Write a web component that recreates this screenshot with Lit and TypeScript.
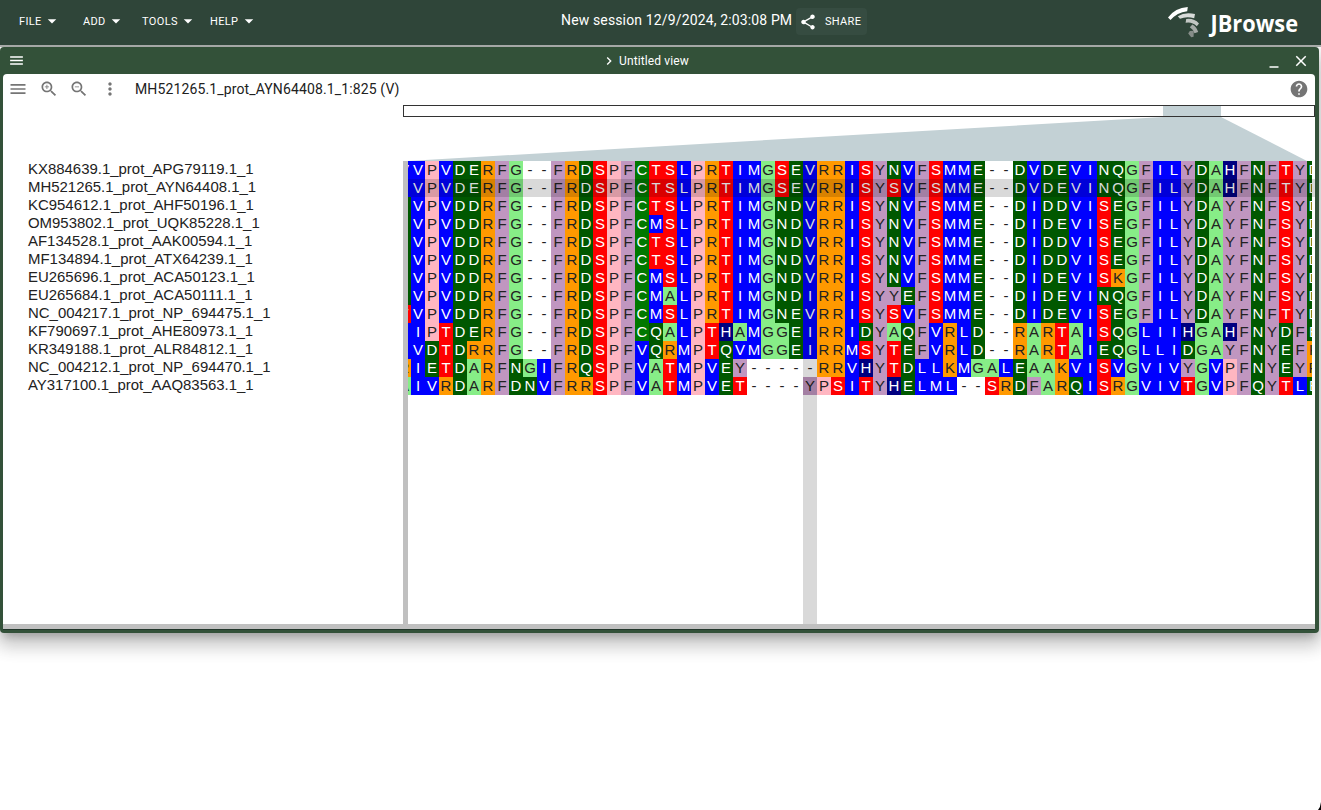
import { LitElement, html, css } from "lit";
import { customElement } from "lit/decorators.js";
import { classMap } from "lit/directives/class-map.js";

const rows: { name: string; seq: string }[] = [
  { name: "KX884639.1_prot_APG79119.1_1", seq: "VVPVDERFG--FRDSPFCTSLPRTIMGSEVRRISYNVFSMME--DVDEVINQGFILYDAHFNFTYD" },
  { name: "MH521265.1_prot_AYN64408.1_1", seq: "IVPVDERFG--FRDSPFCTSLPRTIMGSEVRRISYSVFSMME--DVDEVINQGFILYDAHFNFTYD" },
  { name: "KC954612.1_prot_AHF50196.1_1", seq: "EVPVDDRFG--FRDSPFCTSLPRTIMGNDVRRISYNVFSMME--DIDDVISEGFILYDAYFNFSYD" },
  { name: "OM953802.1_prot_UQK85228.1_1", seq: "EVPVDDRFG--FRDSPFCMSLPRTIMGNDVRRISYNVFSMME--DIDEVISEGFILYDAYFNFSYD" },
  { name: "AF134528.1_prot_AAK00594.1_1", seq: "EVPVDDRFG--FRDSPFCTSLPRTIMGNDVRRISYNVFSMME--DIDDVISEGFILYDAYFNFSYD" },
  { name: "MF134894.1_prot_ATX64239.1_1", seq: "EVPVDDRFG--FRDSPFCTSLPRTIMGNDVRRISYNVFSMME--DIDDVISEGFILYDAYFNFSYD" },
  { name: "EU265696.1_prot_ACA50123.1_1", seq: "EVPVDDRFG--FRDSPFCMSLPRTIMGNDVRRISYNVFSMME--DIDEVISKGFILYDAYFNFSYD" },
  { name: "EU265684.1_prot_ACA50111.1_1", seq: "EVPVDDRFG--FRDSPFCMALPRTIMGNDIRRISYYEFSMME--DIDEVINQGFILYDAYFNFSYD" },
  { name: "NC_004217.1_prot_NP_694475.1_1", seq: "TVPVDDRFG--FRDSPFCMSLPRTIMGNEVRRISYSVFSMME--DIDEVISEGFILYDAYFNFTYD" },
  { name: "KF790697.1_prot_AHE80973.1_1", seq: "IIPTDERFG--FRDSPFCQALPTHAMGGEIRRIDYAQFVRLD--RARTAISQGLIIHGAHFNYDFE" },
  { name: "KR349188.1_prot_ALR84812.1_1", seq: "IVDTDRRFG--FRDSPFVQRMPTQVMGGEIRRMSYTEFVRLD--RARTAIEQGLLIDGAYFNYEFK" },
  { name: "NC_004212.1_prot_NP_694470.1_1", seq: "RIETDARFNGIFRQSPFVATMPVEY-----RRVHYTDLLKMGALEAAKVISVGVIVYGVPFNYEYR" },
  { name: "AY317100.1_prot_AAQ83563.1_1", seq: "AIVRDARFDNVFRRSPFVATMPVET----YPSITYHELML--SRDFARQISRGVIVTGVPFQYTLE" },
];

const groups: [string, string][] = [
  ["VILM", "blue"],
  ["DENQ", "dark"],
  ["ST", "red"],
  ["RK", "orange"],
  ["FY", "mauve"],
  ["GA", "light"],
  ["P", "pink"],
  ["C", "green"],
  ["H", "navy"],
];
const tint = (c: string) => groups.find(([letters]) => letters.includes(c))?.[1] ?? "gap";

const label = (c: string, i: number) => (i === 0 && "EI".includes(c) ? "" : c);

const icon = (size: number, d: string) =>
  html`<svg width=${size} height=${size} viewBox="0 0 24 24" fill="currentColor"><path d=${d}></path></svg>`;
const MENU = "M3 18h18v-2H3v2zm0-5h18v-2H3v2zm0-7v2h18V6H3z";
const GLASS =
  "M15.5 14h-.79l-.28-.27C15.41 12.59 16 11.11 16 9.5 16 5.91 13.09 3 9.5 3S3 5.91 3 9.5 5.91 16 9.5 16c1.61 0 3.09-.59 4.23-1.57l.27.28v.79l5 4.99L20.49 19l-4.99-5zm-6 0C7.01 14 5 11.99 5 9.5S7.01 5 9.5 5 14 7.01 14 9.5 11.99 14 9.5 14z";

@customElement("session-header")
class SessionHeader extends LitElement {
  static styles = css`
    :host { display: flex; height: 45px; background: #2f4539; color: #fff; font-family: Roboto, sans-serif; position: relative; z-index: 1; }
    .menus { display: grid; grid-template-columns: 64px 59px 68px 60px; padding-left: 19px; width: 542px; box-sizing: border-box; height: 42px; align-items: center; }
    .menu { display: flex; align-items: center; justify-content: flex-start; font-size: 11px; letter-spacing: 0.36px; }
    .menu svg { margin-left: 1.5px; }
    .session { display: flex; align-items: center; height: 42px; padding-left: 19px; }
    .name { font-size: 14px; letter-spacing: 0.14px; white-space: nowrap; width: 235px; line-height: 20px; margin-top: -2px; }
    .share { display: flex; align-items: center; background: #364c41; border-radius: 4px; width: 71px; height: 27px; box-sizing: border-box; padding-left: 3px; font-size: 11px; letter-spacing: 0.3px; margin-top: 1px; }
    .share span { margin-left: 8px; }
    .logo { margin-left: auto; width: 155px; height: 45px; }
    .word { font: 700 23.5px "Open Sans", sans-serif; }
  `;
  render() {
    return html`
      <div class="menus">
        ${["FILE", "ADD", "TOOLS", "HELP"].map(
          (m) => html`<div class="menu"><span>${m}</span>${icon(18, "M6.3 9.7l5.7 5.7 5.7-5.7z")}</div>`
        )}
      </div>
      <div class="session">
        <span class="name">New session 12/9/2024, 2:03:08 PM</span>
        <div class="share">
          ${icon(18, "M18 16.08c-.76 0-1.44.3-1.96.77L8.91 12.7c.05-.23.09-.46.09-.7s-.04-.47-.09-.7l7.05-4.11c.54.5 1.25.81 2.04.81 1.66 0 3-1.34 3-3s-1.34-3-3-3-3 1.34-3 3c0 .24.04.47.09.7L8.04 9.81C7.5 9.31 6.79 9 6 9c-1.66 0-3 1.34-3 3s1.34 3 3 3c.79 0 1.5-.31 2.04-.81l7.12 4.16c-.05.21-.08.43-.08.65 0 1.61 1.31 2.92 2.92 2.92 1.61 0 2.92-1.31 2.92-2.92s-1.31-2.92-2.92-2.92z")}
          <span>SHARE</span>
        </div>
      </div>
      <svg class="logo" viewBox="0 0 155 45">
        <path fill="#fff" d="M2 17.5Q9 7.8 21.8 7L21.2 11.2Q11 12.5 4.5 20Z" />
        <path fill="#d8dbd9" d="M11.8 16.2Q19 11.5 29 14L28.2 18.2Q20.5 15.8 14 18.8Z" />
        <path fill="#c3c7c4" d="M20.2 19Q28 18 33 23.5L30.8 26.3Q26 21.5 19.6 22.8Z" />
        <path fill="#a5aaa7" d="M26.4 24.5Q30.5 26.5 32.2 32L28.5 33.2Q27 29.3 23.8 27.3Z" />
        <path fill="#868d89" d="M23.8 31L27.8 30.8L27.6 36.8L25.2 37.2L22.2 33.4Z" />
        <text class="word" x="44.5" y="32" textLength="87.5" lengthAdjust="spacingAndGlyphs" fill="#fff">JBrowse</text>
      </svg>
    `;
  }
}

@customElement("alignment-view")
class AlignmentView extends LitElement {
  static styles = css`
    :host { display: block; width: 1312px; height: 555px; background: #fff; border-radius: 4px 4px 0 0; overflow: hidden; font-family: Roboto, sans-serif; }
    .tools { display: flex; align-items: center; height: 30px; color: #757575; padding: 0 6px 0 5px; box-sizing: border-box; }
    .tools svg { flex: none; margin-right: 10.6px; }
    .tools .loc { color: #212121; font-size: 14px; letter-spacing: 0.13px; margin-left: 4.6px; flex: 1; }
    .tools .help { display: flex; }
    .tools .help svg { margin: 0; }
    .map { display: block; margin: 1px 0 0 400px; }
    .body { display: flex; height: 463px; }
    .names { width: 400px; box-sizing: border-box; padding-left: 25px; font: 14.95px "Liberation Sans", sans-serif; color: #222; }
    .names div { height: 18px; line-height: 16px; }
    .split { width: 5px; background: #c0c0c0; }
    .msa { position: relative; width: 907px; overflow: hidden; }
    .grid { width: 904px; overflow: hidden; }
    .row { display: flex; height: 18px; margin-left: -11px; width: 924px; font: 15px/18px "Liberation Sans", sans-serif; text-align: center; }
    .row span { width: 14px; flex: none; display: flex; justify-content: center; }
    .blue { background: #00f; color: #fff; }
    .dark { background: #005800; color: #fff; }
    .red { background: #f00; color: #fff; }
    .orange { background: #ff9900; color: #222; }
    .mauve { background: #c096c0; color: #222; }
    .light { background: #87ed87; color: #222; }
    .pink { background: #ffb6c1; color: #222; }
    .green { background: #007800; color: #fff; }
    .navy { background: #000080; color: #fff; }
    .gap { color: #222; }
    .hrow { position: absolute; left: 0; right: 0; top: 18px; height: 18px; background: rgba(0, 0, 0, 0.15); }
    .hcol { position: absolute; left: 395px; width: 14px; top: 0; bottom: 0; background: rgba(0, 0, 0, 0.15); }
    .handle { height: 5px; background: #c0c0c0; }
  `;
  render() {
    return html`
      <div class="tools">
        ${icon(20, MENU)}
        ${icon(20, GLASS + "M12 10h-2v2H9v-2H7V9h2V7h1v2h2v1z")}
        ${icon(20, GLASS + "M7 9h5v1H7z")}
        ${icon(20, "M12 8c1.1 0 2-.9 2-2s-.9-2-2-2-2 .9-2 2 .9 2 2 2zm0 2c-1.1 0-2 .9-2 2s.9 2 2 2 2-.9 2-2-.9-2-2-2zm0 6c-1.1 0-2 .9-2 2s.9 2 2 2 2-.9 2-2-.9-2-2-2z")}
        <span class="loc">MH521265.1_prot_AYN64408.1_1:825 (V)</span>
        <span class="help">${icon(20, "M12 2C6.48 2 2 6.48 2 12s4.48 10 10 10 10-4.48 10-10S17.52 2 12 2zm1 17h-2v-2h2v2zm2.07-7.75l-.9.92C13.45 12.9 13 13.5 13 15h-2v-.5c0-1.1.45-2.1 1.17-2.83l1.24-1.26c.37-.36.59-.86.59-1.41 0-1.1-.9-2-2-2s-2 .9-2 2H8c0-2.21 1.79-4 4-4s4 1.79 4 4c0 .88-.36 1.68-.93 2.25z")}</span>
      </div>
      <svg class="map" width="912" height="56">
        <path d="M760 12L818 12L904 56L5 56Z" fill="#c3d1d5" />
        <rect x="760" y="0" width="58" height="12" fill="#c3d1d5" />
        <rect x="0.5" y="0.5" width="911" height="11" fill="none" stroke="#333" />
      </svg>
      <div class="body">
        <div class="names">${rows.map((r) => html`<div>${r.name}</div>`)}</div>
        <div class="split"></div>
        <div class="msa">
          <div class="grid">
            ${rows.map(
              (r) => html`<div class="row">${[...r.seq].map((c, i) => html`<span class=${classMap({ [tint(c)]: true })}>${label(c, i)}</span>`)}</div>`
            )}
          </div>
          <div class="hrow"></div>
          <div class="hcol"></div>
        </div>
      </div>
      <div class="handle"></div>
    `;
  }
}

@customElement("app-root")
class AppRoot extends LitElement {
  static styles = css`
    :host { display: block; position: relative; width: 1321px; height: 810px; overflow: hidden; background: #fff; font-family: Roboto, sans-serif; }
    .desk { height: 765px; padding-top: 2px; box-sizing: border-box; background: linear-gradient(#b0b3b1 0 2px, #fff 2px); }
    .window { width: 1319px; height: 586px; box-sizing: border-box; background: #335139; border-radius: 4px; padding-left: 3px;
      box-shadow: 0 7px 8px -4px rgba(0,0,0,.2), 0 12px 17px 2px rgba(0,0,0,.14), 0 5px 22px 4px rgba(0,0,0,.12); }
    .bar { display: grid; grid-template-columns: 593px 1fr auto; align-items: center; height: 27px; color: #fff; padding: 0 9px 0 4.5px; }
    .bar svg { display: block; }
    .title { display: flex; align-items: center; font-size: 12px; letter-spacing: 0.12px; }
    .title span { margin-left: 2.5px; }
    .buttons { display: flex; gap: 9px; align-items: center; }
    .edge { height: 1px; width: 1312px; background: #22352a; }
    .corner { position: absolute; right: 0; bottom: 0; }
  `;
  render() {
    return html`
      <session-header></session-header>
      <div class="desk">
        <div class="window">
          <div class="bar">
            ${icon(17, MENU)}
            <div class="title">${icon(16, "M10 6L8.59 7.41 13.17 12l-4.58 4.59L10 18l6-6z")}<span>Untitled view</span></div>
            <div class="buttons">
              ${icon(18, "M6 19h12v2H6z")}
              ${icon(18, "M19 6.41L17.59 5 12 10.59 6.41 5 5 6.41 10.59 12 5 17.59 6.41 19 12 13.41 17.59 19 19 17.59 13.41 12z")}
            </div>
          </div>
          <alignment-view></alignment-view>
          <div class="edge"></div>
        </div>
      </div>
      <svg class="corner" width="4" height="8"><path d="M4 0V8H1Q3.5 5 4 0Z" fill="#000" /></svg>
    `;
  }
}
